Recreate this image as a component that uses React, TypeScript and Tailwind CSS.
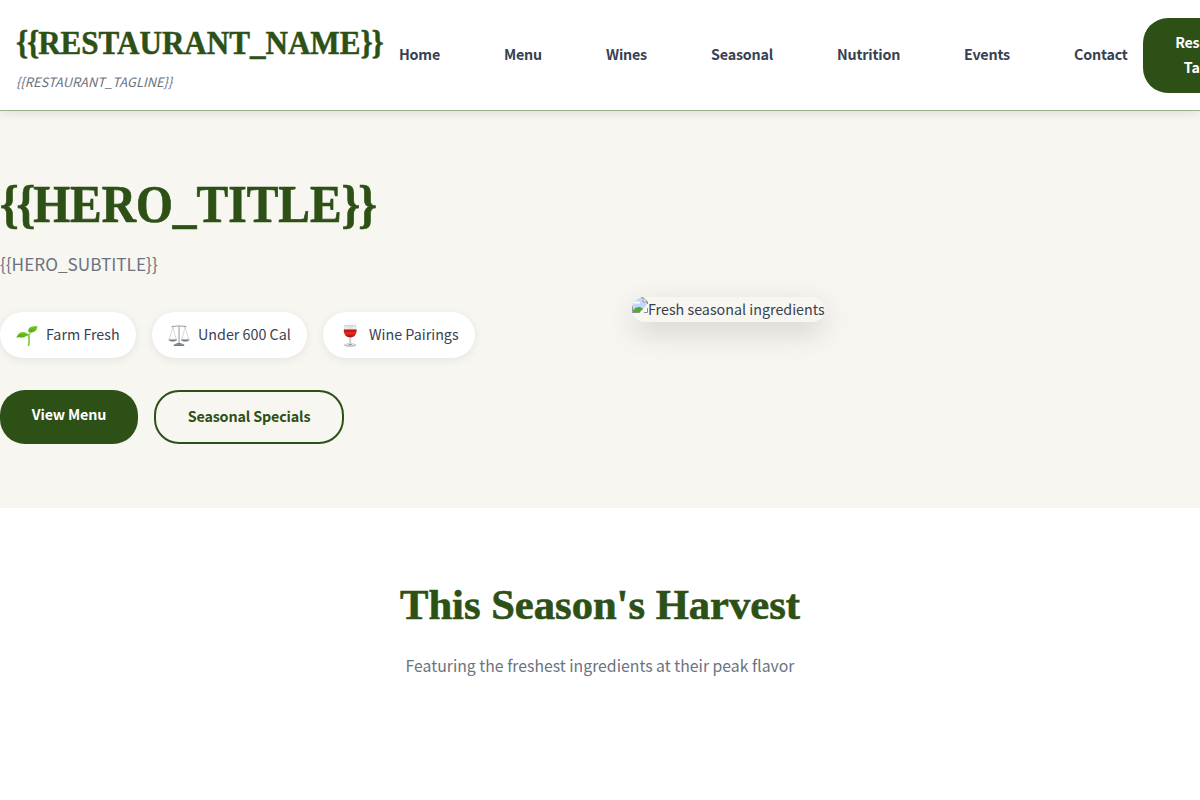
const navItems = [
  { label: "Home", width: "w-[41px]" },
  { label: "Menu", width: "w-[38px]" },
  { label: "Wines", width: "w-[41px]" },
  { label: "Seasonal", width: "w-[62px]" },
  { label: "Nutrition", width: "w-[63px]" },
  { label: "Events", width: "w-[46px]" },
  { label: "Contact", width: "w-[53px]" },
];

function SproutIcon() {
  return (
    <svg width="22" height="22" viewBox="0 0 22 22">
      <defs>
        <linearGradient id="leaf" x1="0" y1="0" x2="0" y2="1">
          <stop offset="0" stopColor="#8fd62c" />
          <stop offset="1" stopColor="#4ba51b" />
        </linearGradient>
      </defs>
      <path d="M12.2 9.5C13.4 12.5 13.4 16 12.6 20.3" fill="none" stroke="#86c93a" strokeWidth="1.7" strokeLinecap="round" />
      <path d="M12.6 10.6C13.2 9 14.2 7.6 16 6.2" fill="none" stroke="#86c93a" strokeWidth="1.1" />
      <path d="M0.4 12.8C1.8 8.2 5 6.6 8 7.1C10.3 7.5 11.6 8.7 12.4 10.2C9.8 10.4 9.1 12.6 6.2 12.6C3.7 12.6 2.4 11.6 0.4 12.8Z" fill="url(#leaf)" />
      <path d="M12.8 7.4C11.4 4.2 13.2 2 16 1.4C18.4 0.9 20.2 1.5 21.4 0.8C21.5 4.5 19.4 7 16.4 7.2C14.9 7.3 13.8 6.8 12.8 7.4Z" fill="url(#leaf)" />
      <path d="M2.5 11C5 9.2 7.8 8.8 11 9.8M14 6C15.7 3.9 17.7 3 20.2 2" fill="none" stroke="#3f9618" strokeWidth="0.5" />
    </svg>
  );
}

function ScaleIcon() {
  return (
    <svg width="22" height="22" viewBox="0 0 22 22" fill="none">
      <path d="M4.8 2.2L1.4 14.5M4.8 2.2L8.3 14.5M17.2 2.2L13.7 14.5M17.2 2.2L20.6 14.5" stroke="#bcc2c8" strokeWidth="0.6" />
      <path d="M4 1.7C6 1.2 8 0.6 11 1.1C14 0.6 16 1.2 18 1.7" stroke="#9ba2aa" strokeWidth="1.1" strokeLinecap="round" />
      <path d="M11 0.8V19" stroke="#a5acb3" strokeWidth="1.4" />
      <path d="M10.7 1V19" stroke="#e2e6e9" strokeWidth="0.5" />
      <path d="M0.4 14.2H9.2C8.6 16 6.8 16.6 4.8 16.6C2.8 16.6 1 16 0.4 14.2ZM12.8 14.2H21.6C21 16 19.2 16.6 17.2 16.6C15.2 16.6 13.4 16 12.8 14.2Z" fill="#727d88" />
      <path d="M0.8 14.2H8.8M13.2 14.2H21.2" stroke="#d6dade" strokeWidth="0.7" />
      <path d="M8.3 18.4C9.4 17.7 12.6 17.7 13.7 18.4L16.2 19.8V21H5.8V19.8Z" fill="#66727e" />
      <path d="M6.4 19.8H15.6" stroke="#b6bec5" strokeWidth="0.5" />
    </svg>
  );
}

function WineIcon() {
  return (
    <svg width="22" height="22" viewBox="0 0 22 22">
      <defs>
        <linearGradient id="wine" x1="0" y1="0" x2="0" y2="1">
          <stop offset="0" stopColor="#a90d10" />
          <stop offset="0.45" stopColor="#f0291f" />
          <stop offset="1" stopColor="#980608" />
        </linearGradient>
      </defs>
      <path d="M5.3 0.5H17.1L17.5 5H4.9Z" fill="#e4e6e5" />
      <path d="M5.3 0.8H17.1" stroke="#b8bcbc" strokeWidth="0.7" />
      <path d="M7.2 1.2V4.5M14.9 1.2V4.5" stroke="#fafafa" strokeWidth="1" />
      <path d="M4.8 4.6H17.6C18 9 15.4 12.6 11.2 12.6C7 12.6 4.4 9 4.8 4.6Z" fill="url(#wine)" />
      <path d="M10.4 12.4H12L12.2 18.8H10.2Z" fill="#b9bebe" />
      <path d="M11 13V18.5" stroke="#f4f4f4" strokeWidth="0.5" />
      <ellipse cx="11.2" cy="20" rx="6" ry="1.7" fill="#b4b9b9" />
      <ellipse cx="11.2" cy="19.5" rx="4.8" ry="0.9" fill="#e2e5e5" />
      <ellipse cx="11.2" cy="19.4" rx="2" ry="0.5" fill="#8d9393" />
    </svg>
  );
}

const features = [
  { icon: <SproutIcon />, label: "Farm Fresh", width: "w-[136px]" },
  { icon: <ScaleIcon />, label: "Under 600 Cal", width: "w-[155px]" },
  { icon: <WineIcon />, label: "Wine Pairings", width: "w-[152px]" },
];

function Header() {
  return (
    <header className="relative z-10 flex h-[111px] items-center border-b border-[#9caf88] bg-white pl-4 shadow-[0_2px_10px_rgba(0,0,0,0.1)]">
      <div className="w-[367px] shrink-0 text-left">
        <div className="h-[51px] origin-left scale-x-[0.906] font-['Liberation_Serif',serif] text-[34.3px] leading-[53px] font-bold whitespace-nowrap text-[#2d5016] [-webkit-text-stroke:0.5px_#2d5016]">
          <span className="tracking-[-1.3px]">{"{{"}</span>RESTAURANT_NAME<span className="tracking-[-1.3px]">{"}}"}</span>
        </div>
        <div className="mt-[3px] mb-px text-[12.9px] leading-[23px] text-[#6b7280] italic">{"{{RESTAURANT_TAGLINE}}"}</div>
      </div>
      <nav className="ml-4 flex shrink-0 gap-16 pb-0.5">
        {navItems.map((item) => (
          <a key={item.label} className={`${item.width} text-[14.3px] leading-[26px] font-semibold tracking-[-0.2px] whitespace-nowrap`}>
            {item.label}
          </a>
        ))}
      </nav>
      <button className="ml-4 h-[75px] w-[121px] shrink-0 rounded-[25px] bg-[#2d5016] pr-[33px] pb-[3px] pl-[31px] text-center text-[14.3px] leading-[25px] font-semibold tracking-[-0.2px] text-white">
        Reserve Table
      </button>
    </header>
  );
}

function MissingPicture() {
  return (
    <svg width="16" height="16" viewBox="0 0 16 16" className="mb-[9px] shrink-0">
      <path d="M0 0H11L16 5V16H0Z" fill="#fff" />
      <path d="M1 1H10.5V5.5H15V8L8 15H1Z" fill="#c3d6fb" />
      <path d="M2 6.5C2 4.5 4 4 5 5C6 3.5 8.5 4.5 8 6.5Z" fill="#fff" />
      <path d="M1 15V13.5C4 9.5 8 9 11 12L8 15Z" fill="#4fab36" />
      <path d="M0.5 16V0.5H11L15.5 5V7M0 15.5H8M11 0.5V5H15.5M12 15.5H15.5V11" fill="none" stroke="#8c8c8c" />
      <path d="M7.5 16L16 7.5V10.5L10.5 16Z" fill="#f8f6f0" />
    </svg>
  );
}

function Hero() {
  return (
    <section className="grid h-[397px] grid-cols-2 items-center gap-16 bg-[#f8f6f0]">
      <div className="h-[269px]">
        <h1 className="h-[58px] origin-left scale-x-[0.912] font-['Liberation_Serif',serif] text-[52px] leading-[59px] font-bold whitespace-nowrap text-[#2d5016] [-webkit-text-stroke:0.7px_#2d5016]">
          <span className="tracking-[-2.3px]">{"{{"}</span>HERO_TITLE<span className="tracking-[-2.3px]">{"}}"}</span>
        </h1>
        <p className="mt-[15px] pb-px text-[17.2px] leading-[31px] text-[#6b7280]">{"{{HERO_SUBTITLE}}"}</p>
        <div className="mt-8 flex gap-4">
          {features.map((f) => (
            <div
              key={f.label}
              className={`${f.width} flex h-[46px] items-center gap-2 rounded-[25px] bg-white pl-4 whitespace-nowrap shadow-[0_2px_10px_rgba(0,0,0,0.08)]`}
            >
              <span className="flex w-[22px] justify-center pt-px">{f.icon}</span>
              <span className="pb-0.5 text-[14.3px] leading-[26px]">{f.label}</span>
            </div>
          ))}
        </div>
        <div className="mt-8 flex gap-4 text-[14.3px] font-semibold tracking-[-0.15px]">
          <button className="flex h-[54px] w-[138px] justify-center rounded-[25px] bg-[#2d5016] pt-[11px] leading-[26px] text-white">
            View Menu
          </button>
          <button className="h-[54px] w-[190px] rounded-[25px] border-2 border-[#2d5016] pb-0.5 leading-[26px] text-[#2d5016]">
            Seasonal Specials
          </button>
        </div>
      </div>
      <div className="flex">
        <div className="flex h-[25px] w-[193px] items-center overflow-hidden rounded-[20px] whitespace-nowrap shadow-[0_10px_30px_rgba(0,0,0,0.15)]">
          <MissingPicture />
          <span className="pb-0.5 text-[14.3px] leading-[25px]">Fresh seasonal ingredients</span>
        </div>
      </div>
    </section>
  );
}

export default function App() {
  return (
    <div className="h-[800px] w-full overflow-hidden bg-white font-['Noto_Sans_CJK_SC',sans-serif] text-[#374151]">
      <Header />
      <Hero />
      <section className="pt-16 text-center">
        <h2 className="font-['Liberation_Serif',serif] text-[42.6px] leading-[66px] font-bold text-[#2d5016] [-webkit-text-stroke:0.6px_#2d5016]">
          This Season's Harvest
        </h2>
        <p className="mt-3.5 text-[15.8px] leading-7 text-[#6b7280]">Featuring the freshest ingredients at their peak flavor</p>
      </section>
    </div>
  );
}
